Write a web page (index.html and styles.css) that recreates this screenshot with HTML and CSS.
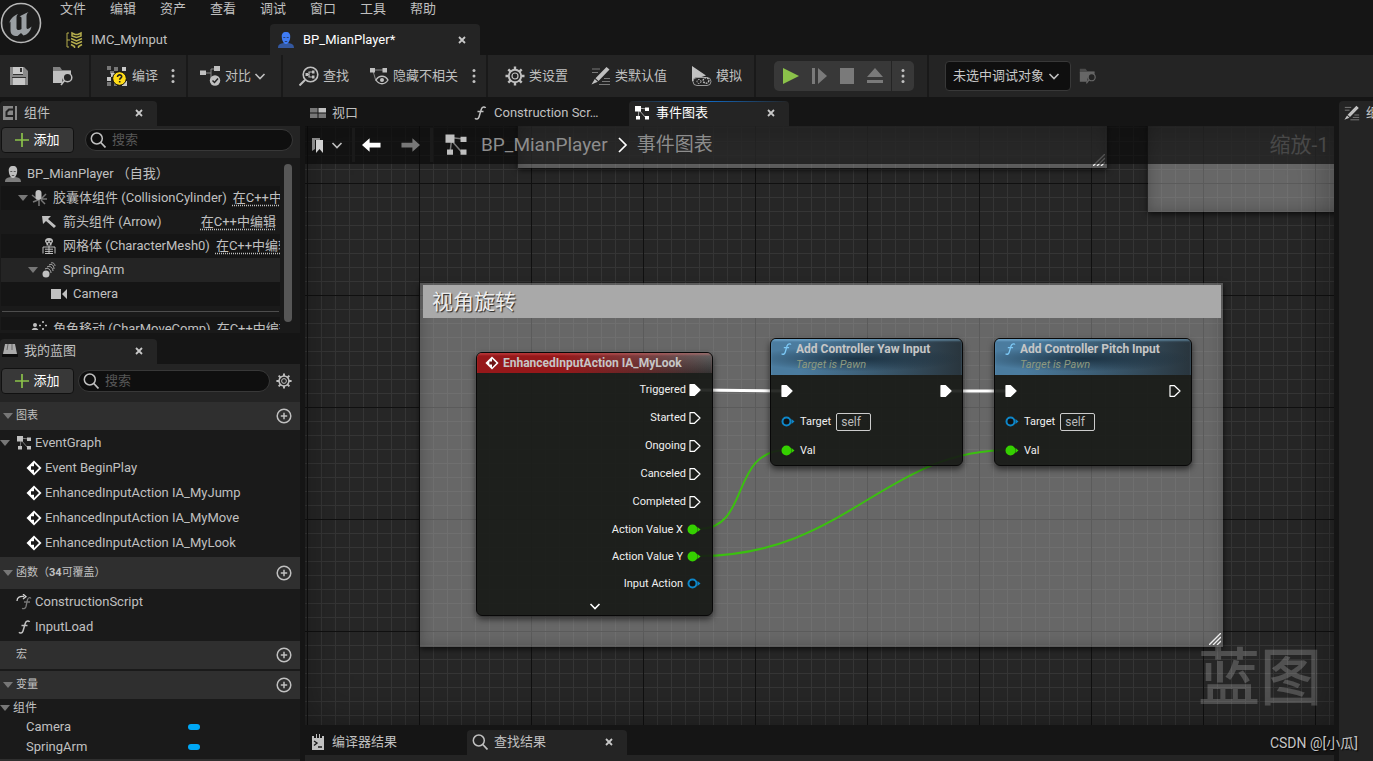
FILE: index.html
```html
<!DOCTYPE html>
<html lang="zh-CN">
<head>
<meta charset="utf-8">
<title>BP_MianPlayer</title>
<link rel="stylesheet" href="styles.css">
</head>
<body>
<svg class="defs" aria-hidden="true">
  <symbol id="fn" viewBox="0 0 16 16"><path d="M13.500 3c-.3-1.300-3.300-1.500-4.200 1.200L7 12c-.7 2.300-3 2.600-4 1.300M5.500 6.500h6" fill="none" stroke="currentColor" stroke-width="1.500"/></symbol>
  <symbol id="graph" viewBox="0 0 16 16"><path d="M4 3l9 1M5 5l-1 8M5 5l7 8" stroke="currentColor" opacity=".6"/><path d="M1 1h6v5.500H1zM11 2.500h4V6h-4zM2 11h4v3.500H2zM11 11h4v3.500h-4z" fill="currentColor"/></symbol>
  <symbol id="chev" viewBox="0 0 12 12"><path d="M1.500 4L6 8.500 10.500 4" fill="none" stroke="currentColor" stroke-width="1.600"/></symbol>
  <symbol id="x" viewBox="0 0 10 10"><path d="M2 2l6 6M8 2L2 8" stroke="currentColor" stroke-width="1.800"/></symbol>
  <symbol id="dots" viewBox="0 0 8 16"><circle cx="4" cy="2.500" r="1.500"/><circle cx="4" cy="8" r="1.500"/><circle cx="4" cy="13.500" r="1.500"/></symbol>
  <symbol id="search" viewBox="0 0 16 16"><circle cx="6.800" cy="6.500" r="5.500" fill="none" stroke="currentColor" stroke-width="1.500"/><path d="M10.800 10.500l4.700 5" stroke="currentColor" stroke-width="1.700"/></symbol>
  <symbol id="gear" viewBox="0 0 20 20"><path d="M10 .5v19M.5 10h19M3.300 3.300l13.400 13.400M16.700 3.300L3.300 16.700" stroke="currentColor" stroke-width="2.400"/><circle cx="10" cy="10" r="6.200" fill="#242424" stroke="currentColor" stroke-width="1.900"/><circle cx="10" cy="10" r="3" fill="none" stroke="currentColor" stroke-width="1.200"/></symbol>
  <symbol id="pencil" viewBox="0 0 20 20"><path d="M1 3h8M1 6.500h6M13 12.500h6M11 15.500h8M8 18.500h11" stroke="currentColor" stroke-width="1.200" opacity=".55"/><path d="M15.500 1l3 2.600L7.500 15l-3-2.800zM3.800 13l3 2.800L.5 18.500z" fill="currentColor"/></symbol>
  <symbol id="browse" viewBox="0 0 22 20"><path d="M1 1h7l2 3h9v2H1z" fill="currentColor" opacity=".6"/><path d="M1 5h18v4a6 6 0 0 0-8 8H1z" fill="currentColor"/><circle cx="15.500" cy="11.500" r="4.300" fill="#242424" stroke="currentColor" stroke-width="1.500"/><path d="M12.500 14.500L9 19" stroke="currentColor" stroke-width="1.600"/></symbol>
  <symbol id="event" viewBox="0 0 16 16"><path d="M8 .5L15.500 8 8 15.500.5 8z" fill="#fff"/><path d="M5 6.300h3V3L13 8l-5 5V9.700H5z" fill="#1a1a1a"/></symbol>
  <symbol id="event-red" viewBox="0 0 16 16"><path d="M8 .5L15.500 8 8 15.500.5 8z" fill="#fff"/><path d="M5 6.300h3V3L13 8l-5 5V9.700H5z" fill="#6c1414"/></symbol>
  <symbol id="tri" viewBox="0 0 10 6"><path d="M0 0h10L5 6z" fill="currentColor"/></symbol>
  <symbol id="plus" viewBox="0 0 14 14"><path d="M7 0v14M0 7h14" stroke="currentColor" stroke-width="1.700"/></symbol>
  <symbol id="addc" viewBox="0 0 16 16"><circle cx="8" cy="8" r="6.800" fill="none" stroke="currentColor" stroke-width="1.500"/><path d="M8 4.800v6.400M4.800 8h6.400" stroke="currentColor" stroke-width="1.500"/></symbol>
  <symbol id="person" viewBox="0 0 16 16"><path d="M0 16c0-4 3-4.500 5.500-5h5c2.500.5 5.500 1 5.500 5z" fill="currentColor" opacity=".6"/><path d="M8 0c3.200 0 4.500 2 4.200 5.200C12 9 10 12 8 12S4 9 3.800 5.200C3.500 2 4.800 0 8 0z" fill="currentColor"/><path d="M5.300 5.500h2M8.700 5.500h2M6.800 9.500h2.400" stroke="#1a1a1a" opacity=".6"/></symbol>
  <symbol id="exec" viewBox="0 0 12 12"><path d="M1 .7h4.500L11 6l-5.500 5.300H1z" stroke="#fff" stroke-width="1.200" stroke-linejoin="round"/></symbol>
  <symbol id="pin" viewBox="0 0 14 10"><circle cx="5.500" cy="5" r="4" stroke="currentColor" stroke-width="2"/><path d="M10.500 2.500L13.500 5l-3 2.500z" fill="currentColor"/></symbol>
  <symbol id="grip" viewBox="0 0 12 12"><path d="M0 12L12 0M4 12l8-8M8 12l4-4" stroke="#eee" stroke-width="1.400"/></symbol>
  <symbol id="arrow" viewBox="0 0 20 14"><path d="M0 7l8-7v4.500h11.500v5H8V14z" fill="currentColor"/></symbol>
</svg>

<div class="app">
  <header class="top">
    <svg class="logo" viewBox="0 0 42 42"><circle cx="21" cy="21" r="19.500" fill="#1c1c1c" stroke="#b8b8b8" stroke-width="1.600"/><path d="M9 22c1-5 4-8 9-10-1 1-1.500 2-1.500 3v11c0 2 2.500 3 5 1V16c0-1-1-1.500-2-1.500 2-1.500 5-2.500 9-4.500-1.500 1.500-2 2.500-2 4.500v11c0 2 2 2 5-1-1 5-4 8-8 9l-2.500-2.500-3.500 3c-5 0-7-2-7-6v-7c0-2-.5-1.500-1.500 1z" fill="#9a9fa3"/></svg>
    <div class="top-rows">
      <nav class="menu"><button>文件</button><button>编辑</button><button>资产</button><button>查看</button><button>调试</button><button>窗口</button><button>工具</button><button>帮助</button></nav>
      <div class="doc-tabs">
        <div class="doc-tab">
          <svg class="i18" viewBox="0 0 18 16" stroke="#b5ad4c" fill="none" stroke-width="1.500"><path d="M3 1H1v14h2M1 8h3" stroke-width="1"/><path d="M6 1l3 1.500h3L15 1v3l-4.500 1.500L6 4zM5 6.500L10.500 9 16 6.500M5 9.500l5.500 2.500L16 9.500M5 12.500l3.500 2v1.500M16 12.500l-3.500 2v1.500"/></svg>
          <span>IMC_MyInput</span>
        </div>
        <div class="doc-tab doc-tab-on">
          <svg class="i16 blue"><use href="#person"/></svg>
          <span>BP_MianPlayer*</span>
          <button class="close" aria-label="关闭"><svg class="i10"><use href="#x"/></svg></button>
        </div>
      </div>
    </div>
  </header>

  <div class="toolbar">
    <div class="grp g-file">
      <button aria-label="保存"><svg class="i22" viewBox="0 0 22 22"><path d="M2 2h14l4 4v14H2z" fill="#8a8a8a"/><path d="M5 2h10v7H5zM5 13h12v7H5z" fill="#c8c8c8"/><path d="M12 3h2v4h-2zM5 9h10v1H5zM4 12h14v1H4z" fill="#333"/></svg></button>
      <button aria-label="浏览"><svg class="i22"><use href="#browse"/></svg></button>
    </div>
    <div class="grp g-compile">
      <button><svg class="i22" viewBox="0 0 22 22"><path d="M1 1h4v4H1zM8 2h4v4H8zM4 6h4v3H4zM1 17h4v4H1zM8 17h3v4H8z" fill="#777"/><path d="M16 2h4v4h-4zM1 12h4v4H1zM16 16h5v5h-5zM5 8h4v4H5z" fill="#c8c8c8"/><circle cx="13.500" cy="13.500" r="6.800" fill="#ffdc17" stroke="#111"/><path d="M11.500 12c0-3 4.500-2.500 4.200-.3-.2 1.300-2 1.500-2 3M13.700 16v1.600" fill="none" stroke="#222" stroke-width="1.600"/></svg>编译</button>
      <button aria-label="编译选项"><svg class="dots"><use href="#dots"/></svg></button>
    </div>
    <div class="grp g-diff">
      <button class="tight"><svg class="i22" viewBox="0 0 22 22"><path d="M5 8h6V4h3M11 8v5" fill="none" stroke="#888"/><path d="M0 5.500h6V10H0zM14 1h6v5h-6z" fill="#c0c0c0"/><circle cx="15" cy="15.500" r="5.200" fill="#c0c0c0"/><path d="M12.500 15.500l2 2 3.500-4" fill="none" stroke="#242424" stroke-width="1.500"/></svg>对比<svg class="i12"><use href="#chev"/></svg></button>
    </div>
    <div class="grp g-find">
      <button><svg class="i20" viewBox="0 0 20 20" fill="none" stroke="#c0c0c0"><circle cx="11.500" cy="8.500" r="7.300" stroke-width="1.600"/><path d="M6 14l-5.500 5.500" stroke-width="2"/><path d="M7 8.500h3M13 6h-3v5h3" stroke-width="1.200"/><path d="M6.500 7h2.500v3H6.500zM13 4.500h2.500v3H13zM13 9.500h2.500v3H13z" fill="#c0c0c0" stroke="none"/></svg>查找</button>
      <button><svg class="i20" viewBox="0 0 20 20"><path d="M3 4h13M4 5l3 10" stroke="#888"/><path d="M1 2h5v4.500H1zM13.500 2H18v4.500h-4.500z" fill="#c0c0c0"/><path d="M7 14c3-5 9-5 12 0-3 5-9 5-12 0z" fill="#242424" stroke="#c0c0c0" stroke-width="1.300"/><circle cx="13" cy="14" r="2" fill="#c0c0c0"/></svg>隐藏不相关</button>
      <button aria-label="隐藏选项"><svg class="dots"><use href="#dots"/></svg></button>
    </div>
    <div class="grp g-class">
      <button><svg class="i20"><use href="#gear"/></svg>类设置</button>
      <button><svg class="i20"><use href="#pencil"/></svg>类默认值</button>
      <button><svg class="i22" viewBox="0 0 22 22"><path d="M2 1l14 9.500-6 2-8 4z" fill="#c0c0c0"/><rect x="3" y="12.500" width="18" height="8" rx="4" fill="#242424" stroke="#999"/><circle cx="9" cy="16.500" r="2" fill="none" stroke="#c0c0c0" stroke-dasharray="1.500 1"/><circle cx="16" cy="15.500" r="2.800" fill="none" stroke="#c0c0c0" stroke-width="1.400" stroke-dasharray="1.800 1"/></svg>模拟</button>
    </div>
    <div class="grp g-play">
      <div class="play">
        <button aria-label="播放"><svg class="i18" viewBox="0 0 18 18"><path d="M1 1l16 8-16 8z" fill="#8bc24a"/></svg></button>
        <button aria-label="步进"><svg class="i18" viewBox="0 0 18 18"><path d="M2 1h3v16H2zM8 1l9 8-9 8z" fill="#7a7a7a"/></svg></button>
        <button aria-label="停止"><svg class="i18" viewBox="0 0 18 18"><path d="M2 1h14v16H2z" fill="#7a7a7a"/></svg></button>
        <button aria-label="弹出"><svg class="i18" viewBox="0 0 18 18"><path d="M9 1l8 9H1zM1 13h16v3H1z" fill="#7a7a7a"/></svg></button>
        <button class="play-more" aria-label="播放选项"><svg class="dots"><use href="#dots"/></svg></button>
      </div>
    </div>
    <div class="grp g-debug">
      <div class="select"><select aria-label="调试对象"><option>未选中调试对象</option></select><svg class="i12"><use href="#chev"/></svg></div>
      <button aria-label="浏览调试对象" class="dim"><svg class="i18"><use href="#browse"/></svg></button>
    </div>
  </div>

  <main class="work">
    <aside class="left">
      <section class="panel">
        <div class="strip"><div class="tab tab-on tab-left"><svg class="i16" viewBox="0 0 16 16"><path d="M1 1h14v14H1z" fill="#888"/><path d="M12 4.500H7L4.500 7v4H12" fill="none" stroke="#222" stroke-width="2"/><path d="M11 1h2v14h-2z" fill="#222"/></svg><span>组件</span><button class="close" aria-label="关闭"><svg class="i10"><use href="#x"/></svg></button></div></div>
        <div class="bar">
          <button class="add"><svg class="i14"><use href="#plus"/></svg>添加</button>
          <label class="search search-wide"><svg class="i16"><use href="#search"/></svg><input type="text" placeholder="搜索" aria-label="搜索组件"></label>
        </div>
        <div class="tree-box">
          <ul class="tree">
            <li class="lv0"><svg class="i16"><use href="#person"/></svg><span>BP_MianPlayer （自我）</span></li>
            <li class="lv1 odd"><svg class="tri"><use href="#tri"/></svg><svg class="i16" viewBox="0 0 16 16"><path d="M1 5l5 4M2 12l5-2M8 10v6M10 9l5-5M10 9l6 0M10 10l4 4" stroke="#777" stroke-width="1.500"/><rect x="4.500" y="0" width="6" height="10" rx="3" fill="#c0c0c0"/></svg><span>胶囊体组件 (CollisionCylinder)</span><a href="#cpp">在C++中编辑</a></li>
            <li class="lv2"><svg class="i16" viewBox="0 0 16 16"><path d="M1 2l9 0-3 3 8 7-2 2-8-7-3 3z" fill="#c0c0c0"/></svg><span>箭头组件 (Arrow)</span><a href="#cpp">在C++中编辑</a></li>
            <li class="lv2 odd"><svg class="i16" viewBox="0 0 16 16"><path d="M8 0c3 0 4 1.500 4 3.500L10.500 6v1.500h-5V6L4 3.500C4 1.500 5 0 8 0z" fill="#c0c0c0"/><path d="M5.500 3.500h1.800M8.700 3.500h1.800M7 6h2" stroke="#1a1a1a" stroke-width="1.300"/><path d="M2 15.500V9h12v6.500M8 8v8M4 11.200h8M4 13.400h8M4 15.500h8" fill="none" stroke="#c0c0c0"/></svg><span>网格体 (CharacterMesh0)</span><a href="#cpp">在C++中编辑</a></li>
            <li class="lv1 lv-arm sel"><svg class="tri"><use href="#tri"/></svg><svg class="i16" viewBox="0 0 16 16"><circle cx="5" cy="12" r="3.500" fill="#c0c0c0"/><path d="M4 7c3-2 6 1 6 4M6 5c3-2 6 1 6 4M8 3c3-2 5 1 5 4M10 1c2-1 4 1 4 3" fill="none" stroke="#aaa"/></svg><span>SpringArm</span></li>
            <li class="lv3 odd"><svg class="i16" viewBox="0 0 16 16"><path d="M0 3h10v10H0zM11 8l5-5v10z" fill="#c0c0c0"/></svg><span>Camera</span></li>
            <li class="lv-move odd"><svg class="i16" viewBox="0 0 16 16"><circle cx="4" cy="4" r="2" fill="#c0c0c0"/><path d="M0 12c0-7 8-7 8 0z" fill="#c0c0c0"/><path d="M12 0v2M12 7v2M8 4.500h2M14 4.500h2" stroke="#c0c0c0" stroke-width="1.600"/></svg><span>角色移动 (CharMoveComp)</span><a href="#cpp">在C++中编辑</a></li>
          </ul>
          <div class="scroll"></div>
        </div>
      </section>
      <section class="panel">
        <div class="strip"><div class="tab tab-on tab-left"><svg class="i16" viewBox="0 0 16 16"><path d="M3 1h10l2 10H1z" fill="#aaa"/><path d="M0 11h16v3H0z" fill="#0c0c0c"/><path d="M6 1L5 7M10 1v6" stroke="#666"/></svg><span>我的蓝图</span><button class="close" aria-label="关闭"><svg class="i10"><use href="#x"/></svg></button></div></div>
        <div class="bar bar-bp">
          <button class="add"><svg class="i14"><use href="#plus"/></svg>添加</button>
          <label class="search"><svg class="i16"><use href="#search"/></svg><input type="text" placeholder="搜索" aria-label="搜索蓝图"></label>
          <button aria-label="设置"><svg class="i16"><use href="#gear"/></svg></button>
        </div>
        <div class="sections">
          <section>
            <h2><svg class="tri"><use href="#tri"/></svg><span>图表</span><button aria-label="添加图表"><svg class="i16"><use href="#addc"/></svg></button></h2>
            <ul class="items">
              <li class="root"><svg class="tri"><use href="#tri"/></svg><svg class="i16"><use href="#graph"/></svg>EventGraph</li>
              <li class="ev"><svg class="i16"><use href="#event"/></svg>Event BeginPlay</li>
              <li class="ev"><svg class="i16"><use href="#event"/></svg>EnhancedInputAction IA_MyJump</li>
              <li class="ev"><svg class="i16"><use href="#event"/></svg>EnhancedInputAction IA_MyMove</li>
              <li class="ev"><svg class="i16"><use href="#event"/></svg>EnhancedInputAction IA_MyLook</li>
            </ul>
          </section>
          <section>
            <h2 class="tall"><svg class="tri"><use href="#tri"/></svg><span>函数（<b>34</b>可覆盖）</span><button aria-label="添加函数"><svg class="i16"><use href="#addc"/></svg></button></h2>
            <ul class="items">
              <li class="fn"><svg class="i16" viewBox="0 0 16 16"><path d="M1 7c0-4 3-5 7-4.500M7 0l3 2.700L7 5" fill="none" stroke="#d0d0d0" stroke-width="1.300"/><path d="M15 4.500c-1-1.500-3-1-3.600 1.500L10 12.500c-.5 2-2 2.500-4 1.800M8 8h6" fill="none" stroke="#777" stroke-width="1.300"/></svg>ConstructionScript</li>
              <li class="fn"><svg class="i16"><use href="#fn"/></svg>InputLoad</li>
            </ul>
          </section>
          <section><h2><svg class="tri hidden"><use href="#tri"/></svg><span>宏</span><button aria-label="添加宏"><svg class="i16"><use href="#addc"/></svg></button></h2></section>
          <section>
            <h2><svg class="tri"><use href="#tri"/></svg><span>变量</span><button aria-label="添加变量"><svg class="i16"><use href="#addc"/></svg></button></h2>
            <ul class="items vars">
              <li class="cat"><svg class="tri"><use href="#tri"/></svg>组件</li>
              <li class="var"><span>Camera</span><i></i></li>
              <li class="var"><span>SpringArm</span><i></i></li>
            </ul>
          </section>
          <section><h2></h2></section>
        </div>
      </section>
    </aside>

    <section class="center">
      <div class="strip">
        <div class="tab"><svg class="i16" viewBox="0 0 16 16"><path d="M0 3h7.500v4.500H0zM0 8.500h7.500V13H0zM8.500 8.500H16V13H8.500z" fill="#777"/><path d="M8.500 3H16v4.500H8.500z" fill="#c0c0c0"/></svg><span>视口</span></div>
        <div class="tab"><svg class="i16"><use href="#fn"/></svg><span>Construction Scr…</span></div>
        <div class="tab tab-on tab-active"><svg class="i16"><use href="#graph"/></svg><span>事件图表</span><button class="close" aria-label="关闭"><svg class="i10"><use href="#x"/></svg></button></div>
      </div>

      <div class="graph">
        <div class="comment c-top"><svg class="grip"><use href="#grip"/></svg></div>
        <div class="comment c-right"></div>
        <div class="comment c-main"><h3>视角旋转</h3><svg class="grip"><use href="#grip"/></svg></div>

        <svg class="wires">
          <path d="M394 264L480 265M644 265H704" stroke="#fff" stroke-width="3"/>
          <path d="M394 403C446 403 424 324 482 324M394 430C540 430 580 324 704 324" stroke="#3bc010" stroke-width="2"/>
        </svg>

        <article class="node n-event">
          <h4><svg class="i14"><use href="#event-red"/></svg>EnhancedInputAction IA_MyLook</h4>
          <ul class="outs">
            <li>Triggered<svg class="exec on"><use href="#exec"/></svg></li>
            <li>Started<svg class="exec"><use href="#exec"/></svg></li>
            <li>Ongoing<svg class="exec"><use href="#exec"/></svg></li>
            <li>Canceled<svg class="exec"><use href="#exec"/></svg></li>
            <li>Completed<svg class="exec"><use href="#exec"/></svg></li>
            <li class="data">Action Value X<svg class="pin green"><use href="#pin"/></svg></li>
            <li class="data">Action Value Y<svg class="pin green"><use href="#pin"/></svg></li>
            <li class="data">Input Action<svg class="pin cyan"><use href="#pin"/></svg></li>
          </ul>
          <button class="expand" aria-label="展开"><svg class="i12"><use href="#chev"/></svg></button>
        </article>

        <article class="node n-fn n-yaw">
          <header><svg class="i14"><use href="#fn"/></svg><div><h4>Add Controller Yaw Input</h4><p>Target is Pawn</p></div></header>
          <div class="row exec-row"><svg class="exec on"><use href="#exec"/></svg><svg class="exec on"><use href="#exec"/></svg></div>
          <div class="row"><svg class="pin cyan"><use href="#pin"/></svg><span>Target</span><span class="self">self</span></div>
          <div class="row"><svg class="pin green"><use href="#pin"/></svg><span>Val</span></div>
        </article>

        <article class="node n-fn n-pitch">
          <header><svg class="i14"><use href="#fn"/></svg><div><h4>Add Controller Pitch Input</h4><p>Target is Pawn</p></div></header>
          <div class="row exec-row"><svg class="exec on"><use href="#exec"/></svg><svg class="exec"><use href="#exec"/></svg></div>
          <div class="row"><svg class="pin cyan"><use href="#pin"/></svg><span>Target</span><span class="self">self</span></div>
          <div class="row"><svg class="pin green"><use href="#pin"/></svg><span>Val</span></div>
        </article>

        <div class="mark">蓝图</div>

        <div class="crumbs">
          <button class="bookmark" aria-label="书签"><svg class="i16" viewBox="0 0 16 16"><path d="M1 1h8v2H4v9l-3 2z" fill="#888"/><path d="M5 3h7v13l-3.500-4L5 16z" fill="#d0d0d0"/></svg><svg class="i12"><use href="#chev"/></svg></button>
          <div class="nav"><button aria-label="后退"><svg class="arrow white"><use href="#arrow"/></svg></button><button aria-label="前进"><svg class="arrow fwd"><use href="#arrow"/></svg></button></div>
          <svg class="i24"><use href="#graph"/></svg>
          <a href="#bp">BP_MianPlayer</a>
          <svg class="sepchev" viewBox="0 0 12 16"><path d="M2 1l7 7-7 7" fill="none" stroke="#fff" stroke-width="1.700"/></svg>
          <a href="#graph">事件图表</a>
          <span class="zoom">缩放-1</span>
        </div>
      </div>

      <div class="strip strip-low">
        <div class="tab"><svg class="i16" viewBox="0 0 16 16"><path d="M2 2h2v2h2V0h1v4h2V0h1v4h2V2h2v14H2z" fill="#c0c0c0"/><path d="M4 7l3 2-3 2.500M8 13h4" fill="none" stroke="#1a1a1a" stroke-width="1.400"/></svg><span>编译器结果</span></div>
        <div class="tab tab-on"><svg class="i16"><use href="#search"/></svg><span>查找结果</span><button class="close" aria-label="关闭"><svg class="i10"><use href="#x"/></svg></button></div>
      </div>
      <div class="foot"></div>
    </section>

    <aside class="right"><div class="tab"><svg class="i16"><use href="#pencil"/></svg><span>细节</span></div></aside>
  </main>
  <div class="credit">CSDN @[小瓜]</div>
</div>
</body>
</html>
```
FILE: styles.css
```css
* { box-sizing: border-box; }
body {
  margin: 0;
  background: #151515;
  color: #c0c0c0;
  font: 13px/18px Roboto, "Noto Sans CJK SC", sans-serif;
}
button {
  display: flex;
  align-items: center;
  gap: 4px;
  padding: 0;
  border: 0;
  background: none;
  color: inherit;
  font: inherit;
  white-space: nowrap;
}
ul { list-style: none; margin: 0; padding: 0; }
h2, h3, h4, p { margin: 0; font-weight: normal; }
svg { display: block; flex: none; }
.defs { position: absolute; width: 0; height: 0; }
.i10 { width: 10px; height: 10px; }
.i12 { width: 12px; height: 12px; }
.i14 { width: 14px; height: 14px; }
.i16 { width: 16px; height: 16px; }
.i18 { width: 18px; height: 18px; }
.i20 { width: 20px; height: 20px; }
.i22 { width: 22px; height: 22px; }
.i24 { width: 24px; height: 24px; }
.dots { width: 8px; height: 16px; fill: currentColor; }
.tri { width: 10px; height: 6px; color: #777; }
.hidden { visibility: hidden; }
.blue { color: #3f7cf4; }
.green { color: #35d000; fill: currentColor; }
.cyan { color: #0e86c8; fill: #111; }

.app { display: flex; flex-direction: column; height: 100vh; overflow: hidden; }

/* menu and document tabs */
.top { display: flex; height: 55px; }
.logo { width: 42px; height: 42px; margin: 2px 18px 0 0; }
.top-rows { flex: 1; display: flex; flex-direction: column; justify-content: space-between; }
.menu { display: flex; gap: 24px; }
.doc-tabs { display: flex; }
.doc-tab { display: flex; align-items: center; gap: 7px; width: 210px; height: 31px; padding: 0 13px 0 6px; }
.doc-tab-on { gap: 9px; padding-left: 8px; background: #242424; color: #fff; border-radius: 4px 4px 0 0; }
.close { margin-left: auto; color: #c8c8c8; }

/* toolbar */
.toolbar { display: flex; height: 42px; background: #242424; flex: none; }
.grp { display: flex; align-items: center; border-right: 2px solid #191919; }
.g-file { gap: 22px; padding: 0 15px 0 8px; }
.g-compile { gap: 11px; padding: 0 9px 0 15px; }
.g-diff { padding: 0 15px 0 12px; }
.g-diff .tight { gap: 3px; }
.g-find { gap: 20px; padding: 0 8px 0 16px; }
.g-find button:last-child { margin-left: -8px; }
.g-class { gap: 23px; padding: 0 12px 0 17px; }
.g-play { padding: 0 13px 0 18px; }
.g-debug { gap: 8px; padding-left: 16px; border: 0; }
.play { display: flex; height: 30px; gap: 10px; padding-left: 8px; background: #383838; border-radius: 5px; }
.play-more { padding: 0 7px; border-left: 1px solid #242424; margin-left: -3px; }
.select { position: relative; }
.select select { appearance: none; width: 126px; height: 30px; padding: 0 24px 0 7px; color: #c8c8c8; background: #0f0f0f; border: 1px solid #383838; border-radius: 4px; font: inherit; }
.select svg { position: absolute; right: 11px; top: 9px; pointer-events: none; }
.dim { color: #666; }

/* dock layout */
.work { flex: 1; min-height: 0; display: flex; gap: 5px; }
.left { width: 300px; flex: none; display: flex; flex-direction: column; gap: 6px; overflow: hidden; }
.center { flex: 1; min-width: 0; display: flex; flex-direction: column; }
.right { width: 34px; flex: none; margin-top: 4px; background: #242424; border-radius: 4px 0 0 0; overflow: hidden; }
.strip { display: flex; align-items: flex-end; gap: 2px; height: 29px; flex: none; }
.tab { display: flex; align-items: center; gap: 6px; width: 160px; height: 25px; padding: 0 13px 2px 5px; white-space: nowrap; }
.tab-on { background: #242424; border-radius: 4px 4px 0 0; }
.tab-left { width: 157px; padding-left: 2px; }
.tab-active { color: #fff; background: linear-gradient(90deg, #242424, #1268c0, #242424) top / 100% 1px no-repeat #242424; }

.bar { display: flex; align-items: center; gap: 6px; height: 32px; padding: 0 7px 5px 1px; background: #242424; }
.bar-bp { height: 38px; padding: 0 8px 4px 1px; }
.panel + .panel .strip { height: 25px; }
.add { justify-content: center; width: 73px; height: 26px; background: #383838; border: 1px solid #111; border-radius: 4px; color: #fff; }
.add svg { color: #8bc24a; }
.search { flex: 1; display: flex; align-items: center; gap: 6px; height: 22px; padding: 0 4px; background: #0f0f0f; border: 1px solid #383838; border-radius: 11px; }
.search-wide { margin-left: 5px; }
.bar-bp .search { margin-left: -2px; }
.search input { width: 100%; min-width: 0; padding: 0; border: 0; outline: 0; background: none; color: #c0c0c0; font: inherit; }
.search input::placeholder { color: #575757; }

/* component tree */
.tree-box { display: flex; justify-content: space-between; height: 175px; padding: 4px 8px 3px 1px; background: #1a1a1a; }
.tree { width: 279px; overflow: hidden; }
.tree li { display: flex; align-items: center; gap: 6px; height: 24px; white-space: nowrap; overflow: hidden; }
.tree span { flex: none; }
.tree a { flex: none; margin-left: auto; padding-right: 4px; color: inherit; text-decoration: underline dotted; text-underline-offset: 3px; }
.tree .odd { background: #151515; }
.tree .sel { background: #242424; }
.tree .lv0 { padding-left: 4px; }
.tree .lv1 { padding-left: 17px; }
.tree .lv1 .tri { margin-right: -3px; }
.tree .lv2 { padding-left: 40px; }
.tree .lv-arm { padding-left: 27px; }
.tree .lv3 { padding-left: 50px; }
.tree .odd a { margin-left: 0; }
.tree .lv-move { position: relative; margin-top: 11px; padding-left: 30px; overflow: visible; }
.tree .lv-move::before { content: ""; position: absolute; left: 1px; right: 1px; top: -6px; height: 1px; background: #4d4d4d; }
.scroll { width: 8px; height: 158px; margin-top: 2px; border-radius: 4px; background: #575757; }

/* blueprint sections */
.sections { display: flex; flex-direction: column; gap: 2px; background: #1a1a1a; }
.sections h2 { display: flex; align-items: center; gap: 3px; height: 28px; padding: 0 8px 0 3px; background: #2f2f2f; font-size: 11px; }
.sections h2.tall { height: 32px; }
.sections h2 button { margin-left: auto; }
.items li { display: flex; align-items: center; gap: 3px; height: 25px; }
.items .root .tri { margin-right: 3px; }
.items .ev { padding-left: 26px; }
.items .fn { padding-left: 16px; }
.vars .cat { height: 18px; font-size: 12px; }
.vars .var { height: 20px; padding-left: 26px; }
.vars span { width: 159px; }
.vars i { width: 12px; height: 6px; border-radius: 3px; background: #00a8f6; }

/* graph canvas */
.graph {
  position: relative;
  flex: 1;
  overflow: hidden;
  background:
    linear-gradient(90deg, #101010 1px, transparent 1px) 2px 0 / 112px 112px,
    linear-gradient(#101010 1px, transparent 1px) 0 57px / 112px 112px,
    linear-gradient(90deg, #353535 1px, transparent 1px) 2px 0 / 14px 14px,
    linear-gradient(#353535 1px, transparent 1px) 0 1px / 14px 14px,
    #262626;
}
.graph::after { content: ""; position: absolute; inset: 0; box-shadow: inset 0 0 40px rgba(0, 0, 0, .35); pointer-events: none; }
.comment { position: absolute; background: rgba(180, 180, 180, .46); box-shadow: 0 2px 6px rgba(0, 0, 0, .7), inset 0 0 14px rgba(0, 0, 0, .25); }
.c-top { left: 213px; top: -60px; width: 589px; height: 102px; }
.c-right { left: 843px; right: -20px; top: -60px; height: 146px; }
.c-main { left: 115px; top: 157px; width: 803px; height: 364px; padding: 2px 2px 0 3px; }
.c-main h3 { height: 33px; padding-left: 9px; background: #a9a9a9; color: #eee; font-size: 21px; line-height: 34px; text-shadow: 1px 1px 1px #222; }
.grip { position: absolute; right: 2px; bottom: 2px; width: 12px; height: 12px; }
.wires { position: absolute; left: 0; top: 0; width: 100%; height: 100%; fill: none; }

.node { position: absolute; border: 1px solid #080808; border-radius: 6px; background: rgba(22, 24, 21, .91); box-shadow: 0 3px 6px rgba(0, 0, 0, .6); color: #f0f0f0; font-size: 11px; overflow: hidden; }
.node h4 { font-size: 12px; line-height: 14px; font-weight: bold; color: #c6c6c6; }
.n-event { left: 171px; top: 226px; width: 237px; height: 264px; }
.node.n-event h4 { display: flex; align-items: center; gap: 4px; height: 20px; padding-left: 8px; background: linear-gradient(90deg, #96181a 35%, transparent 100%), linear-gradient(#666, #333); box-shadow: inset 0 2px 2px rgba(255, 120, 120, .3); }
.outs { padding: 3px 11px 0 0; }
.outs li { display: flex; align-items: center; justify-content: flex-end; gap: 3px; height: 28px; }
.outs .data { height: 27px; gap: 4px; }
.exec { width: 12px; height: 12px; fill: none; }
.exec.on { fill: #fff; }
.pin { width: 14px; height: 11px; }
.expand { margin: 0 auto; padding-top: 3px; color: #fff; }
.n-fn { top: 212px; height: 128px; }
.n-yaw { left: 465px; width: 193px; }
.n-pitch { left: 689px; width: 198px; }
.n-fn header { display: flex; gap: 3px; height: 36px; padding: 3px 8px; background: radial-gradient(ellipse 55% 35% at 45% 55%, rgba(20, 40, 55, .8), transparent), linear-gradient(90deg, #4b7c9f 15%, #29353d 100%); box-shadow: inset 0 2px 2px rgba(150, 210, 250, .4); }
.n-fn header svg { color: #7cc8f5; }
.n-fn p { color: #8d9a80; font-style: italic; line-height: 18px; }
.row { display: flex; align-items: center; gap: 5px; height: 29px; padding: 0 10px; }
.exec-row { justify-content: space-between; height: 32px; }
.self { width: 35px; height: 18px; padding-left: 4px; border: 1px solid #ccc; border-radius: 2px; color: #bbb; font-size: 12px; line-height: 16px; }

.mark { position: absolute; right: 12px; bottom: 14px; color: rgba(255, 255, 255, .2); font-size: 62px; line-height: 64px; font-weight: 500; }

.crumbs { position: absolute; left: 0; right: 0; top: 0; display: flex; align-items: center; height: 38px; padding: 0 5px 0 6px; background: rgba(10, 10, 10, .68); font-size: 19px; z-index: 1; }
.crumbs a { color: #8d8d8d; text-decoration: none; }
.bookmark { height: 34px; padding-right: 9px; border-right: 3px solid #1a1a1a; }
.nav { display: flex; gap: 20px; height: 34px; padding: 0 10px 0 7px; margin-right: 11px; border-right: 3px solid #1a1a1a; }
.arrow { width: 19px; height: 14px; }
.white { color: #fff; }
.fwd { color: #777; transform: scaleX(-1); }
.crumbs .i24 { margin-right: 13px; }
.sepchev { width: 12px; height: 16px; margin: 0 8px 0 9px; }
.zoom { margin-left: auto; color: #484848; font-size: 21px; }

.strip-low { height: 30px; }
.foot { height: 6px; background: #242424; }
.credit { position: absolute; right: 15px; bottom: 9px; color: #c4c4c4; text-shadow: 1px 1px 1px #000; font-size: 14px; }
```
